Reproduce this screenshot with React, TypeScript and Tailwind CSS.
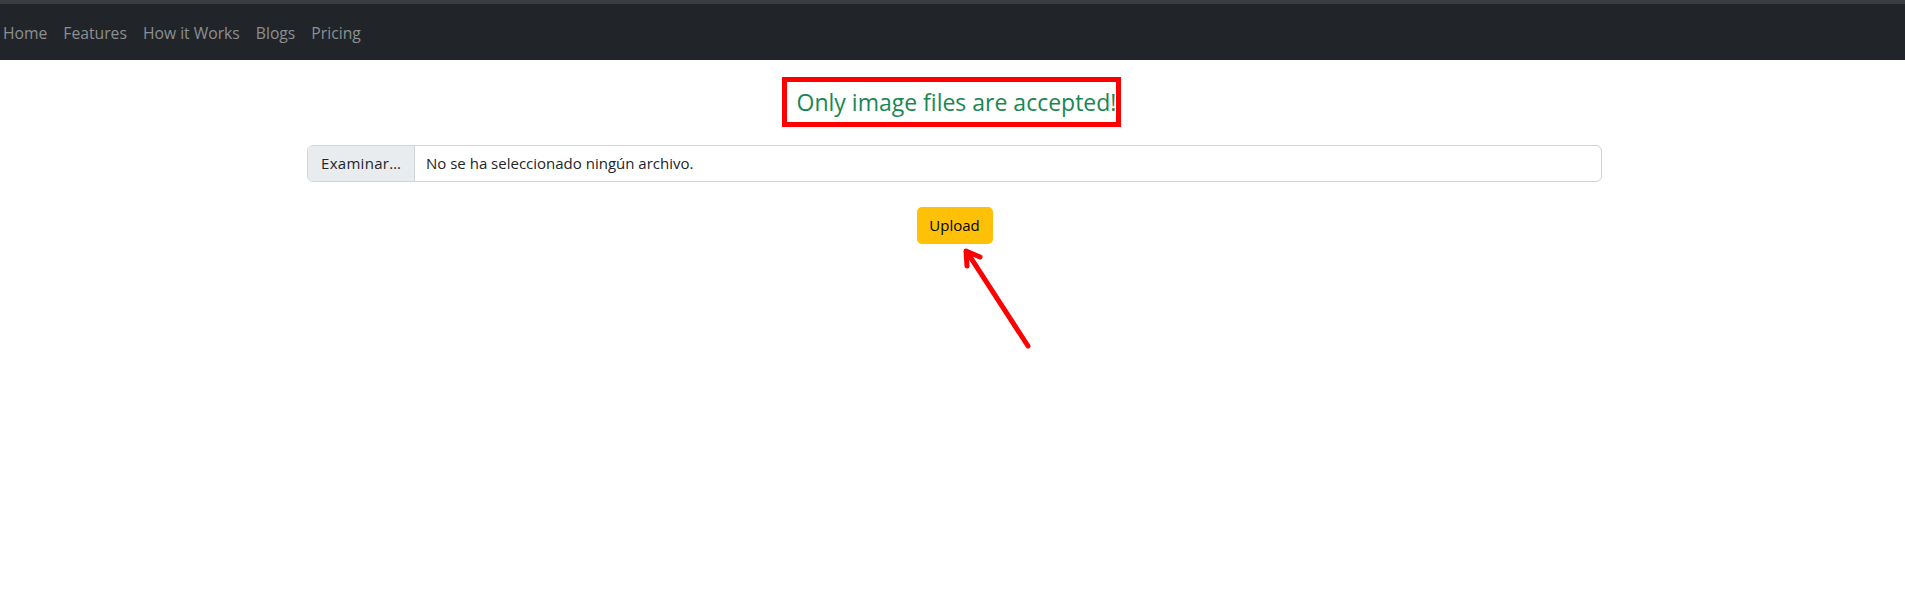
import React from 'react';

const NAV_LINKS = ['Home', 'Features', 'How it Works', 'Blogs', 'Pricing'];

const App: React.FC = () => {
  return (
    <div className="relative w-full h-[601px] bg-white font-['Open_Sans',sans-serif] text-[#212529]">
      {/* barra superior */}
      <div className="h-[4px] bg-[#3c3d41]" />
      <nav className="h-[56px] bg-[#212529] flex items-center pl-[3px] pt-[4px] gap-[16px]">
        {NAV_LINKS.map(link => (
          <a key={link} href="#" className="text-[15.7px] text-[#8c8f92] leading-none">
            {link}
          </a>
        ))}
      </nav>

      <main className="flex flex-col items-center pl-[4px]">
        {/* mensaje con recuadro rojo */}
        <div className="mt-[17px] mr-[6px] h-[50px] border-[5px] border-[#ff0000] flex items-center pl-[10px] pr-0">
          <h4 className="text-[23px] text-[#198754] leading-none">Only image files are accepted!</h4>
        </div>

        {/* input de archivo */}
        <div className="mt-[18px] w-[1295px] h-[37px] flex border border-[#ced4da] rounded-[6px] overflow-hidden text-[15px]">
          <span className="w-[107px] bg-[#e9ecef] border-r border-[#ced4da] flex items-center pl-[13px] tracking-[0.3px]">
            Examinar…
          </span>
          <span className="flex items-center pl-[11px]">No se ha seleccionado ningún archivo.</span>
        </div>

        <button className="mt-[25px] w-[76px] h-[37px] bg-[#ffc107] rounded-[5px] text-[15px] text-black">
          Upload
        </button>
      </main>

      {/* flecha roja */}
      <svg className="absolute left-0 top-0 pointer-events-none" width="1905" height="601">
        <path
          d="M1028 346 L967 252 M967 266 L966 251 L980 257"
          fill="none"
          stroke="#ff0000"
          strokeWidth="5"
          strokeLinecap="round"
          strokeLinejoin="round"
        />
      </svg>
    </div>
  );
};

export default App;
